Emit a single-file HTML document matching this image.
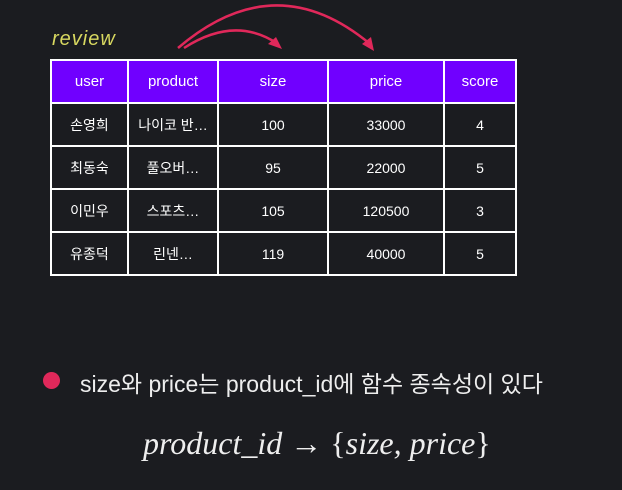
<!DOCTYPE html><html><head><meta charset="utf-8"><style>
body{margin:0;width:622px;height:490px;background:#1b1c20;position:relative;overflow:hidden;font-family:"Liberation Sans","Noto Sans CJK KR",sans-serif}
table{position:absolute;left:50px;top:59px;border-collapse:collapse;border:2px solid #fff}
td{border:2px solid #fff;color:#fff;text-align:center;font-size:14px;height:41px;padding:0;vertical-align:middle}
tr.h td{background:#7000ff;font-size:15px}
.t{position:absolute;color:#fff}
</style></head><body>
<div class="t" style="left:52px;top:28px;color:#d8d860;font-family:'Liberation Sans',sans-serif;font-style:italic;font-size:20px;letter-spacing:1px">review</div>
<svg width="622" height="60" style="position:absolute;left:0;top:0">
<path d="M178 48 Q275 -35 370 44" stroke="#e0285a" stroke-width="2.5" fill="none"/>
<path d="M184 48 Q235 15 278 44" stroke="#e0285a" stroke-width="2.5" fill="none"/>
<polygon points="282,49 268,44 276,37" fill="#e0285a"/>
<polygon points="374,51 362,44 371,37" fill="#e0285a"/>
</svg>
<table>
<colgroup><col style="width:77px"><col style="width:90px"><col style="width:110px"><col style="width:116px"><col style="width:72px"></colgroup>
<tr class="h"><td>user</td><td>product</td><td>size</td><td>price</td><td>score</td></tr>
<tr><td>손영희</td><td>나이코 반…</td><td>100</td><td>33000</td><td>4</td></tr>
<tr><td>최동숙</td><td>풀오버…</td><td>95</td><td>22000</td><td>5</td></tr>
<tr><td>이민우</td><td>스포츠…</td><td>105</td><td>120500</td><td>3</td></tr>
<tr><td>유종덕</td><td>린넨…</td><td>119</td><td>40000</td><td>5</td></tr>
</table>
<div style="position:absolute;left:43px;top:372px;width:17px;height:17px;border-radius:50%;background:#e0285a"></div>
<div class="t" style="left:80px;top:365px;font-size:23px;color:#eee">size와 price는 product_id에 함수 종속성이 있다</div>
<div class="t" style="left:143px;top:425px;font-family:'Liberation Serif',serif;font-style:italic;font-size:32px;color:#eee;white-space:nowrap">product_id <span style="font-style:normal">→ {</span>size, price<span style="font-style:normal">}</span></div>
</body></html>
